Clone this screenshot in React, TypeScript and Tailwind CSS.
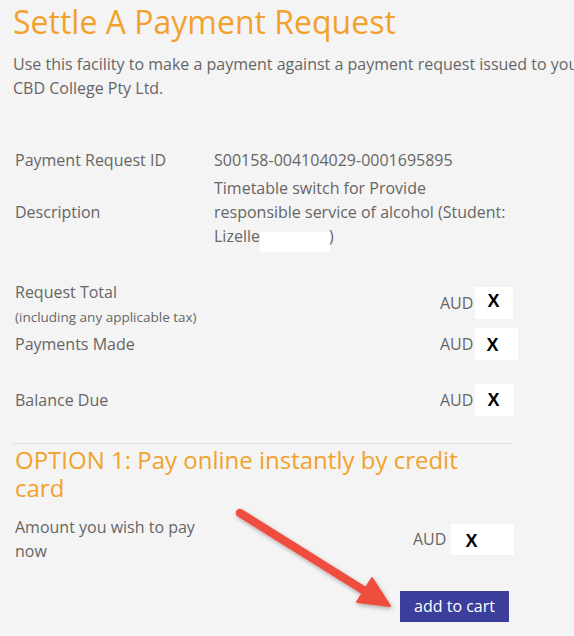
import React from "react";

function XBox({ w, h, xPad, top }: { w: number; h: number; xPad: string; top: string }) {
  return (
    <span
      className={`inline-flex bg-white text-black font-bold text-[18px] leading-none ${xPad} ${top}`}
      style={{ width: w, height: h, fontFamily: '"Liberation Sans", Arial, sans-serif' }}
    >
      X
    </span>
  );
}

export default function App() {
  return (
    <div className="relative w-full h-[636px] overflow-hidden bg-[#f4f4f4] text-[#666] font-['Open_Sans',sans-serif]">
      <div className="pl-[13px] pt-[2px]">
        <h1 className="text-[32px] leading-[40px] text-[#f2a22c] whitespace-nowrap">Settle A Payment Request</h1>
        <p className="mt-[10px] text-[16px] leading-[24px] whitespace-nowrap">
          Use this facility to make a payment against a payment request issued to you by
          <br />
          CBD College Pty Ltd.
        </p>

        <div className="w-[498px] mt-[48px] text-[16px] leading-[24px]">
          <div className="flex pl-[2px]">
            <div className="w-[199px]">Payment Request ID</div>
            <div>S00158-004104029-0001695895</div>
          </div>
          <div className="flex items-center pl-[2px] mt-[4px]">
            <div className="w-[199px]">Description</div>
            <div>
              Timetable switch for Provide
              <br />
              responsible service of alcohol (Student:
              <br />
              Lizelle
              <span className="inline-block align-top w-[70px] h-[20px] bg-white mt-[8px] -mb-[8px]" />
              <span className="-ml-[1px]">)</span>
            </div>
          </div>

          <div className="flex items-center pl-[2px] mt-[32px]">
            <div className="w-[425px] shrink-0">
              <div>Request Total</div>
              <div className="text-[13.5px] leading-[18px] mt-[4px]">(including any applicable tax)</div>
            </div>
            <div className="flex items-center">
              <span className="mr-[2px]">AUD</span>
              <XBox w={38} h={32} xPad="pl-[12px]" top="pt-[5px]" />
            </div>
          </div>

          <div className="flex items-center pl-[2px] mt-[4px] h-[28px]">
            <div className="w-[425px] shrink-0">Payments Made</div>
            <div className="flex items-center">
              <span className="mr-[2px]">AUD</span>
              <XBox w={43} h={32} xPad="pl-[11px]" top="pt-[8px]" />
            </div>
          </div>

          <div className="flex items-center pl-[2px] mt-[28px] h-[28px]">
            <div className="w-[425px] shrink-0">Balance Due</div>
            <div className="flex items-center">
              <span className="mr-[2px]">AUD</span>
              <XBox w={39} h={32} xPad="pl-[12px]" top="pt-[7px]" />
            </div>
          </div>

          <div className="mt-[29px] border-t border-dotted border-[#cfcfcf]" />

          <h2 className="mt-[2px] pl-[2px] text-[24px] leading-[28px] text-[#f2a22c]">
            OPTION 1: Pay online instantly by credit card
          </h2>

          <div className="flex items-center pl-[2px] mt-[13px]">
            <div className="w-[398px] shrink-0">
              <div className="w-[190px]">Amount you wish to pay now</div>
            </div>
            <div className="flex items-center">
              <span className="mr-[5px]">AUD</span>
              <XBox w={63} h={31} xPad="pl-[14px]" top="pt-[8px]" />
            </div>
          </div>

          <div className="flex justify-end mt-[28px] pr-[2px]">
            <button className="w-[109px] h-[31px] bg-[#3b3f9b] text-white text-[16px] leading-[31px] text-center">
              add to cart
            </button>
          </div>
        </div>
      </div>

      <svg
        className="absolute left-0 top-0 pointer-events-none"
        width="574"
        height="636"
        viewBox="0 0 574 636"
      >
        <defs>
          <filter id="sh" x="-20%" y="-20%" width="140%" height="140%">
            <feDropShadow dx="1" dy="2" stdDeviation="2" floodColor="#000" floodOpacity="0.3" />
          </filter>
        </defs>
        <g filter="url(#sh)" fill="#ef4d3e" stroke="#ef4d3e">
          <line x1="240" y1="513" x2="368" y2="593" strokeWidth="8.5" strokeLinecap="round" />
          <polygon points="390,606 357,602 372,578" strokeWidth="2" strokeLinejoin="round" />
        </g>
      </svg>
    </div>
  );
}
